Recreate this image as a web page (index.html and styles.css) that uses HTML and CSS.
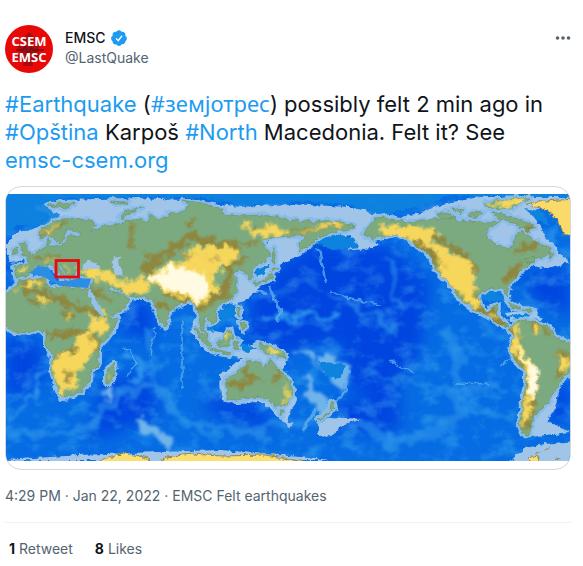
FILE: index.html
```html
<!DOCTYPE html>
<html lang="en">
<head>
    <meta charset="UTF-8">
    <meta name="viewport" content="width=device-width, initial-scale=1.0">
    <title>EMSC on Twitter</title>
    <link rel="stylesheet" href="styles.css">
</head>
<body>
    <article class="tweet">
        <header class="tweet-header">
            <svg class="avatar" viewBox="0 0 48 48" role="img" aria-label="EMSC logo">
                <circle cx="24" cy="24" r="24" fill="#e80808"/>
                <path d="M24 7l9 9h-5v5l8-4-3 9 3 8-9 1 1 6H18l1-6-7-2 3-6-4-7 9 2v-6h-5z" fill="#a80a10"/>
                <path d="M11 25h7l2-4 3 8 3-6 2 2h11" fill="none" stroke="#6f1016" stroke-width="1.5"/>
                <text x="24" y="21" text-anchor="middle">CSEM</text>
                <text x="24" y="37" text-anchor="middle">EMSC</text>
            </svg>
            <div class="author">
                <div class="author-name">
                    <a href="#">EMSC</a>
                    <svg class="verified" viewBox="0 0 24 24" role="img" aria-label="Verified account">
                        <path fill="#1d9bf0" d="M22.500 12.500c0-1.580-.875-2.950-2.148-3.600.154-.435.238-.905.238-1.400 0-2.210-1.710-3.998-3.818-3.998-.47 0-.92.084-1.336.25C14.818 2.415 13.510 1.500 12 1.500s-2.816.917-3.437 2.250c-.415-.165-.866-.25-1.336-.25-2.110 0-3.818 1.790-3.818 4 0 .494.083.964.237 1.400-1.272.65-2.147 2.018-2.147 3.600 0 1.495.782 2.798 1.942 3.486-.02.17-.032.34-.032.514 0 2.210 1.708 4 3.818 4 .47 0 .92-.086 1.335-.25.620 1.334 1.926 2.250 3.437 2.250 1.512 0 2.818-.916 3.437-2.250.415.163.865.248 1.336.248 2.110 0 3.818-1.790 3.818-4 0-.174-.012-.344-.033-.513 1.158-.687 1.943-1.990 1.943-3.484z"/>
                        <path d="M8 12.500l3 3 5-6.500" fill="none" stroke="#fff" stroke-width="1.800"/>
                    </svg>
                </div>
                <a class="handle" href="#">@LastQuake</a>
            </div>
            <button class="more" type="button" aria-label="More">
                <svg viewBox="0 0 16 6">
                    <circle cx="2.500" cy="3" r="1.800"/>
                    <circle cx="8" cy="3" r="1.800"/>
                    <circle cx="13.500" cy="3" r="1.800"/>
                </svg>
            </button>
        </header>

        <p class="tweet-text"><a href="#">#Earthquake</a> (<a href="#" lang="mk">#земјотрес</a>) possibly felt 2 min ago in <a href="#">#Opština</a> Karpoš <a href="#">#North</a> Macedonia. Felt it? See <a href="#">emsc-csem.org</a></p>

        <div class="media">
            <svg class="map" viewBox="6 193 564 267" role="img" aria-label="World map with the Balkans marked by a red box">
                <defs>
                    <filter id="rough" x="-5%" y="-5%" width="110%" height="110%">
                        <feTurbulence type="fractalNoise" baseFrequency="0.16" numOctaves="3" seed="4"/>
                        <feDisplacementMap in="SourceGraphic" scale="6" xChannelSelector="R" yChannelSelector="G"/>
                    </filter>
                    <filter id="relief" x="-5%" y="-5%" width="110%" height="110%">
                        <feTurbulence type="fractalNoise" baseFrequency="0.13" numOctaves="4" seed="9"/>
                        <feDisplacementMap in="SourceGraphic" scale="15" xChannelSelector="R" yChannelSelector="G" result="moved"/>
                        <feGaussianBlur in="moved" stdDeviation="0.8"/>
                    </filter>
                    <filter id="sea" x="-10%" y="-10%" width="120%" height="120%">
                        <feTurbulence type="fractalNoise" baseFrequency="0.06" numOctaves="4" seed="2"/>
                        <feDisplacementMap in="SourceGraphic" scale="24" xChannelSelector="R" yChannelSelector="G" result="moved"/>
                        <feGaussianBlur in="moved" stdDeviation="1.800"/>
                    </filter>
                    <filter id="deep" x="-20%" y="-20%" width="140%" height="140%">
                        <feGaussianBlur stdDeviation="8"/>
                    </filter>
                    <filter id="mottle" x="0" y="0" width="100%" height="100%">
                        <feTurbulence type="fractalNoise" baseFrequency="0.05 0.07" numOctaves="4" seed="12"/>
                        <feColorMatrix values="0 0 0 0 .1  0 0 0 0 .6  0 0 0 0 .92  3 0 0 0 -1.400"/>
                    </filter>
                    <g id="land">
                        <!-- Europe and Asia -->
                        <path d="M14 265L28 264 27 256 35 253 40 248 46 244 48 237 51 245 60 245 67 241 68 235 72 235 80 235 80 230 72 231 67 228 66 236 60 243 54 238 48 234 42 238 39 233 43 227 52 222 62 218 75 217 90 220 98 224 90 229 99 229 105 223 113 225 125 220 140 218 148 221 150 213 158 218 170 213 185 210 188 203 182 200 190 200 202 203 224 209 222 213 240 215 262 214 280 217 300 220 320 220 340 221 355 225 345 230 333 231 318 236 309 245 300 250 299 242 306 235 290 235 275 236 262 240 267 248 271 254 262 262 252 267 254 277 250 279 245 272 240 269 234 272 237 280 236 292 228 300 218 305 214 309 217 318 211 323 206 315 203 322 208 334 207 337 201 328 199 316 196 305 188 299 178 304 168 313 166 326 161 321 154 303 148 296 138 296 128 294 116 289 111 285 108 287 113 292 121 293 130 298 125 308 108 316 103 315 97 300 90 287 94 276 86 276 79 276 78 269 75 271 74 276 69 278 66 272 60 264 58 265 66 274 63 278 57 270 49 264 42 264 35 265 28 275 16 277Z"/>
                        <path d="M20 242L25 241 28 250 30 254 22 255 23 248zM13 249L18 247 17 253 13 253z"/>
                        <!-- Africa and Madagascar -->
                        <path d="M2 297L12 288 19 280 38 277 45 278 47 284 58 288 64 285 76 287 88 288 95 302 104 317 118 317 115 326 108 336 99 346 99 362 91 370 90 379 82 390 70 396 62 397 57 385 51 368 53 356 46 344 46 332 38 328 30 332 14 331 2 324Z"/>
                        <path d="M114 362L115 370 110 382 106 382 106 371z"/>
                        <!-- Australia, New Zealand, New Guinea -->
                        <path d="M225 378L238 371 247 361 259 360 266 368 271 357 276 367 283 372 291 382 293 392 285 404 275 406 267 397 250 396 237 399 227 398 228 390zM279 409L284 409 282 415z"/>
                        <path d="M331 401L335 407 330 410zM330 411L319 420 317 417zM257 342L270 345 281 350 287 357 277 355 264 351z"/>
                        <!-- Indonesia, Philippines, Japan -->
                        <path d="M217 341L226 333 231 329 232 337 228 345 220 346zM195 327L201 332 212 344 209 346 200 338zM211 347L231 352 229 354 212 350zM234 340L240 339 237 343 239 348 235 348zM237 306L240 308 240 315 237 314zM240 321L246 325 243 330z"/>
                        <path d="M273 246L276 254 275 263 272 261zM273 266L278 267 272 270zM272 272L273 278 263 281 255 284 253 282 264 278z"/>
                        <!-- North America -->
                        <path d="M375 218L366 228 364 234 374 238 386 235 396 233 408 238 421 248 431 256 435 268 447 280 460 298 472 307 487 315 500 323 510 326 504 320 497 314 498 304 491 306 487 312 480 304 479 293 489 288 503 288 507 296 509 285 516 275 525 266 537 258 551 253 551 248 538 242 529 235 521 230 514 236 514 245 507 248 496 243 487 238 488 229 500 220 485 221 465 220 450 217 432 218 408 221 385 217Z"/>
                        <path d="M437 213L447 211 456 217 443 218zM452 207L464 209 460 213zM471 210L484 211 478 218 468 216zM493 211L515 216 535 226 528 231 514 222 499 219zM485 202L514 197 530 197 512 207 490 208zM523 259L535 256 533 262zM548 250L555 252 550 258zM507 301L521 307 513 307zM523 308L533 309 530 312z"/>
                        <!-- South America -->
                        <path d="M509 329L515 322 522 319 538 322 549 326 556 337 574 343 574 365 560 382 549 400 539 410 532 420 530 431 525 434 519 426 522 405 526 382 526 371 516 360 510 349 514 336Z"/>
                        <!-- Arctic islands -->
                        <path d="M119 216L127 209 143 207 132 211 122 218zM49 204L75 202 69 207 55 206zM110 200L128 201 120 203z"/>
                    </g>
                    <mask id="landMask" maskUnits="userSpaceOnUse" x="0" y="185" width="580" height="285">
                        <use href="#land" fill="#fff"/>
                    </mask>
                </defs>

                <rect x="6" y="193" width="564" height="267" fill="#066ce3"/>
                <g fill="#0644e0" filter="url(#deep)">
                    <path d="M315 240L390 245 430 280 420 350 390 400 350 390 340 340 280 355 245 340 252 285z"/>
                    <path d="M6 250L20 265 6 280zM6 335L40 340 45 380 6 400z"/>
                    <path d="M520 275L570 265 570 315 535 300zM550 390L570 380 570 425 552 422zM210 395L265 405 270 430 205 410zM100 385L150 370 160 415 90 440zM125 300L150 300 155 340 120 330zM335 402L400 395 400 430 340 432z"/>
                </g>
                <rect x="6" y="193" width="564" height="267" filter="url(#mottle)" opacity="0.3"/>
                <g fill="none" stroke="#2b93ea" filter="url(#sea)">
                    <path d="M445 330Q460 345 458 370T462 412Q440 435 385 445" stroke-width="12" opacity=".6"/>
                    <path d="M6 430Q70 440 95 418T140 386Q165 380 175 410T280 425T390 445" stroke-width="9" opacity=".6"/>
                    <path d="M150 325Q145 365 175 405M365 370Q430 395 510 385M460 400L515 420M330 290L400 330M390 260L400 305" stroke-width="5" opacity=".6"/>
                    <path d="M125 360Q145 355 140 370T125 378M10 420L50 370M260 320Q300 310 340 318" stroke-width="4"/>
                </g>
                <g fill="none" stroke="#63b5ee" filter="url(#rough)" opacity=".75">
                    <path d="M182 320V388M155 325L151 355M318 246L325 280M329 290L350 298 381 304M122 348L131 349 137 362 126 376M320 250L326 282M500 365L515 355M455 382L490 383M390 360L415 372" stroke-width="1.500"/>
                    <path d="M270 285L275 300 281 312 276 320M240 287L268 292M348 365L345 390 335 402M303 430L316 408" stroke-width="3"/>
                </g>

                <!-- shallow water -->
                <g fill="#a1c4e9" filter="url(#rough)">
                    <path d="M62 199L140 197 200 200 240 206 290 203 350 206 400 216 425 211 442 203 480 196 574 196 574 215 545 205 532 212 545 235 566 258 570 262 540 268 525 262 500 250 480 230 400 222 365 235 380 245 366 249 347 248 352 234 320 238 300 255 282 262 268 280 245 300 225 305 222 290 240 270 262 260 270 235 340 225 100 230 68 246 35 256 10 262 6 245 15 232 38 226 52 215 34 206z"/>
                    <path d="M200 305L215 330 235 335 245 345 265 340 288 355 282 370 295 385 296 400 287 420 295 423 288 425 275 414 265 402 235 403 221 400 220 374 243 357 225 355 205 350 190 330z"/>
                    <path d="M318 424L318 435 330 434 345 424 362 418 330 416z"/>
                    <path d="M530 410L560 375 556 405 548 420 570 431 530 436 520 420zM525 447L545 443 574 440 574 464 510 460zM505 312L535 308 543 318 510 320z"/>
                    <path d="M6 459L80 454 130 452 220 449 300 456 330 460H6z"/>
                </g>
                <g fill="#6fb4ea" filter="url(#sea)">
                    <path d="M304 370L318 394 330 404 320 407 303 395zM290 348L312 355 320 370 310 362zM318 350L352 364 346 388 328 380zM135 420L157 420 162 430 176 446 165 447zM104 385L113 386 107 403z"/>
                </g>
                <g fill="#0b83df" filter="url(#rough)">
                    <path d="M2 189H574V196L450 195 420 206 385 214 370 212 350 204 300 200 240 204 200 196 60 197 45 204 60 215 45 225 15 224 2 240z" opacity=".9"/>
                    <path d="M314 239L334 232 354 238 358 246 335 249 318 243zM252 270L272 262 264 273 256 276zM318 360L346 364 340 378 325 375zM482 294L495 290 502 298 490 302z"/>
                    <path d="M202 321L215 325 213 332zM216 309L235 305 234 315 219 322zM236 341L258 347 245 352zM524 207L543 211 550 225 536 218zM505 316L530 312 525 319z"/>
                </g>
                <use href="#land" fill="#a1c4e9" stroke="#8abce9" stroke-width="6" stroke-linejoin="round" filter="url(#rough)"/>
                <path d="M29 272L38 265 48 266 57 280 67 280 80 277 91 278 88 287 60 285 44 276z" fill="#2c8de5"/>

                <g filter="url(#rough)">
                    <use href="#land" fill="#7caa80" stroke="#71915f" stroke-width=".7"/>
                    <g mask="url(#landMask)">
                        <g fill="none" stroke="#918339" filter="url(#relief)" stroke-linecap="round" stroke-linejoin="round" opacity=".9">
                            <path d="M132 223L130 246M40 234L64 221M35 257L60 257M145 255L170 252M195 220L185 225M248 226L290 232 340 223M210 245L260 242M20 282L48 280M30 300L75 302M65 312L75 318M90 287L110 300M155 302L170 309M235 265L245 257" stroke-width="4"/>
                            <path d="M50 335L90 330 95 345 75 350 55 358M25 288L60 298M60 300L95 312M430 233L465 255 475 270M515 252L536 242M560 353L572 358" stroke-width="7"/>
                            <path d="M145 268L190 235 235 247 225 290 200 306 170 290z" stroke-width="9"/>
                            <path d="M230 384L258 380M245 369L255 378M275 372L280 378M505 280L520 266M528 227L535 231" stroke-width="6"/>
                            <path d="M405 232L433 250 455 280 480 306 500 318" stroke-width="14"/>
                            <path d="M512 330L518 355 533 372 526 425" stroke-width="10"/>
                            <path d="M565 350L558 375M535 325L545 329" stroke-width="5"/>
                        </g>
                        <g fill="#f6d75b" filter="url(#relief)">
                            <path d="M185 249L205 244 235 246 240 257 224 266 214 277 218 288 207 304 192 300 165 290 148 281 152 271 170 263 185 260zM240 220L250 222 253 229 275 222 288 230 284 236 252 234zM330 220L347 222 340 224 308 230 290 235 315 225z"/>
                            <path d="M78 268L98 267 105 268 118 277 129 281 141 276 148 283 146 292 130 292 115 287 103 277 87 276z"/>
                            <path d="M77 334L92 331 94 350 85 366 75 385 60 396 53 377 53 355 75 352zM88 312L108 320 103 332 91 333zM38 296L53 299 45 307zM15 288L30 280 49 279 37 284zM95 299L108 315 102 315zM67 313L73 315 69 319z"/>
                            <path d="M39 233L56 222 50 231zM18 267L29 266 27 272 18 272zM40 260L50 258 58 260 45 263zM62 262L67 264 72 271 67 271z"/>
                            <path d="M378 225L408 225 437 228 433 240 450 253 469 258 475 268 473 288 484 308 471 307 458 290 446 280 436 267 437 253 414 239 380 236z"/>
                            <path d="M513 326L521 324 518 341 533 363 538 370 535 390 531 403 530 421 520 423 528 382 523 366 511 350zM558 353L572 355 562 375zM485 312L500 316 498 318zM534 326L543 327 540 332zM266 345L284 353 275 354zM289 382L291 396 283 403z"/>
                            <path d="M224 336L231 333 225 342zM485 201L526 197 520 206 495 206zM109 369L112 371 109 378z"/>
                        </g>
                        <g fill="#fffbe2" filter="url(#relief)">
                            <path d="M152 272L172 266 200 271 208 282 211 293 199 300 186 293 165 287 150 278z"/>
                            <path d="M513 345L526 357 539 369 535 392 529 400 528 369z"/>
                        </g>
                        <g fill="#ab984a" filter="url(#relief)">
                            <path d="M63 373L78 370 70 382zM440 258L447 264 440 263zM205 256L222 256 209 260zM178 251L199 253 184 257z"/>
                        </g>
                    </g>
                    <path d="M81 264L90 259 95 263 102 266 96 268 82 268zM114 256L121 257 118 261 122 270 123 275 115 273 112 262z" fill="#a1c4e9"/>
                    <path d="M89 289L103 309 103 317 96 310 88 293z" fill="#94c0ea"/>
                    <path d="M527 203L544 200 576 198 576 238 562 230 557 218 548 210z" fill="#f9da6b" stroke="#97883e"/>
                    <path d="M90 463L115 455 122 452 140 455 150 458 148 463zM155 463L166 456 193 453 222 455 265 454 290 458 315 464zM528 457L537 454 541 463 530 463z" fill="#f9df72" stroke="#8f884e"/>
                    <path d="M535 453L541 450M545 449L551 447M555 457L561 458" stroke="#8f884e"/>
                </g>
                <rect x="56" y="259.500" width="22.500" height="16.500" fill="none" stroke="#e60b12" stroke-width="2.800"/>
            </svg>
        </div>

        <div class="meta">
            <a href="#">4:29 PM · Jan 22, 2022</a> · <a href="#">EMSC Felt earthquakes</a>
        </div>
        <div class="stats">
            <a href="#"><strong>1</strong> Retweet</a>
            <a href="#"><strong>8</strong> Likes</a>
        </div>
    </article>
</body>
</html>
```
FILE: styles.css
```css
body {
    margin: 0;
    background: #fff;
    color: #0f1419;
    font-family: Inter, Roboto, sans-serif;
    font-size: 14px;
    line-height: 20px;
}
a {
    color: inherit;
    text-decoration: none;
}
.tweet {
    padding: 25px 12px 0 5px;
}
.tweet-header {
    display: flex;
    gap: 12px;
}
.avatar {
    width: 48px;
    height: 48px;
    flex: none;
}
.avatar text {
    fill: #fff;
    font-family: "Open Sans", sans-serif;
    font-size: 13px;
    font-weight: 700;
}
.author {
    flex: 1;
    padding-top: 3px;
}
.author-name {
    display: flex;
    align-items: center;
    gap: 4px;
    font-weight: 500;
}
.verified {
    width: 18px;
    height: 18px;
}
.handle,
.meta,
.stats {
    color: #536471;
}
.more {
    align-self: flex-start;
    display: flex;
    margin-top: 10px;
    padding: 0;
    border: none;
    background: none;
    cursor: pointer;
}
.more svg {
    width: 16px;
    height: 6px;
    fill: #536471;
}
.tweet-text {
    margin: 16px 0 12px;
    font-size: 22px;
    line-height: 28px;
}
.tweet-text a {
    color: #1d9bf0;
    white-space: nowrap;
}
.tweet-text a:lang(mk) {
    font-family: "Noto Sans", sans-serif;
}
.media {
    padding: 7px 0 8px;
    border: 1px solid #cfd9de;
    border-radius: 16px;
    overflow: hidden;
}
.map {
    display: block;
    width: 100%;
    height: auto;
}
.meta {
    padding: 16px 0;
    border-bottom: 1px solid #eff3f4;
}
.stats {
    display: flex;
    gap: 22px;
    padding: 16px 4px;
}
.stats strong {
    color: #0f1419;
}
```
